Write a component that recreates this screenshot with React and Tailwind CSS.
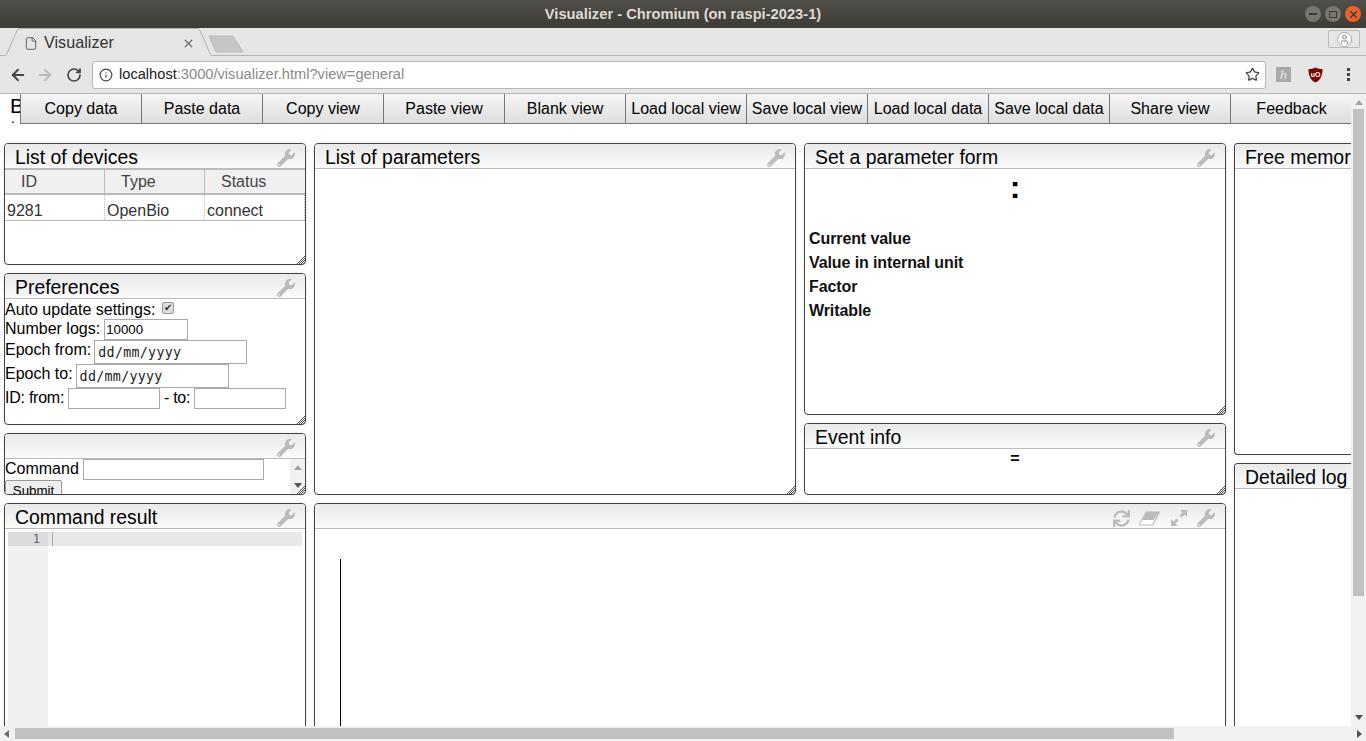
import { ArrowLeft, ArrowRight, RotateCw, Info, Star, File, X, User } from 'lucide-react';
import { FaWrench, FaSync } from 'react-icons/fa';

const toolbarButtons = [
  'Copy data', 'Paste data', 'Copy view', 'Paste view', 'Blank view', 'Load local view',
  'Save local view', 'Load local data', 'Save local data', 'Share view', 'Feedback',
];

const Panel = ({ title, className = '', icons, noResize, clipRight, children }) => (
  <div className={`relative flex flex-col min-w-0 bg-white border border-[#444] rounded-[4px] overflow-hidden shadow-[0_0_3px_rgba(0,0,0,0.12)] ${clipRight ? 'border-r-0 rounded-r-none' : ''} ${className}`}>
    <div className="h-[25px] shrink-0 flex items-start pl-[10px] pr-[10px] bg-gradient-to-b from-[#e9e9e9] to-[#fbfbfb] border-b border-[#bbb]">
      <span className="flex-1 text-[19.4px] leading-[26px] text-black whitespace-nowrap">{title}</span>
      {icons}
      {!clipRight && <FaWrench className="ml-[9px] mt-[5px] w-[18px] h-[18px] text-[#bbb]" />}
    </div>
    <div className="relative flex-1 min-h-0 overflow-hidden">{children}</div>
    {!noResize && !clipRight && (
      <svg className="absolute right-0 bottom-0" width="9" height="9" viewBox="0 0 9 9">
        <path d="M9 1L1 9M9 3L3 9M9 5L5 9M9 7L7 9" stroke="#555" strokeWidth="1" />
      </svg>
    )}
  </div>
);

const Field = ({ className = '', value = '' }) => (
  <input
    readOnly
    value={value}
    className={`h-[21px] px-[1px] bg-white border border-[#aaa] text-[13.3px] text-black outline-none ${className}`}
  />
);

const DateField = ({ className = '' }) => (
  <input
    readOnly
    value="dd/mm/yyyy"
    className={`h-[24px] w-[153px] pl-[3px] bg-white border border-[#aaa] text-[13.3px] tracking-[0.3px] text-[#222] outline-none font-['DejaVu_Sans_Mono',monospace] ${className}`}
  />
);

const TitleBar = () => (
  <div className="relative h-[28px] shrink-0 flex items-center justify-center bg-gradient-to-b from-[#504f49] to-[#3c3b37]">
    <span className="text-[14.7px] font-bold text-[#dfdbd2]">Visualizer - Chromium (on raspi-2023-1)</span>
    <div className="absolute right-[5px] top-[6px] flex gap-[4px]">
      <div className="w-[16px] h-[16px] rounded-full bg-[#77766f] flex items-center justify-center">
        <div className="w-[8px] h-[2px] bg-[#3c3b37]" />
      </div>
      <div className="w-[16px] h-[16px] rounded-full bg-[#77766f] flex items-center justify-center">
        <div className="w-[8px] h-[7px] border border-[#3c3b37]" />
      </div>
      <div className="w-[16px] h-[16px] rounded-full bg-[#e9622c] flex items-center justify-center">
        <X className="w-[11px] h-[11px] text-[#3c3b37]" strokeWidth={3} />
      </div>
    </div>
  </div>
);

const TabStrip = () => (
  <div className="relative h-[28px] shrink-0 bg-[#e6e6e4] border-b border-[#b5b5b3]">
    {/* tab outline and new tab button are drawings */}
    <svg className="absolute left-0 top-0" width="250" height="28" viewBox="0 0 250 28">
      <path d="M0 28H6L17 2.5Q18 0.5 20 0.5H197Q199 0.5 200 2.5L211 28" fill="#e6e6e4" stroke="#b2b2b0" />
      <path d="M6 28H211" stroke="#e6e6e4" strokeWidth="2" />
      <path d="M209 8H233L243 24H216Z" fill="#c6c6c6" stroke="#bbb" strokeLinejoin="round" />
    </svg>
    <File className="absolute left-[24px] top-[8px] w-[14px] h-[15px] text-[#555]" strokeWidth={1.5} />
    <span className="absolute left-[44px] top-[4px] text-[16.2px] leading-[20px] text-[#333]">Visualizer</span>
    <X className="absolute left-[182px] top-[9px] w-[13px] h-[13px] text-[#777]" strokeWidth={2.5} />
    <div className="absolute right-[6px] top-[2px] w-[32px] h-[18px] rounded-[2px] border border-[#bbb] flex items-center justify-center">
      <div className="w-[15px] h-[15px] rounded-full bg-white border border-[#aaa] flex items-center justify-center">
        <User className="w-[11px] h-[11px] text-[#777]" />
      </div>
    </div>
  </div>
);

const AddressBar = () => (
  <div className="h-[38px] shrink-0 flex items-center bg-[#e6e6e4] border-b border-[#b5b5b3]">
    <ArrowLeft className="ml-[9px] w-[18px] h-[18px] text-[#444]" strokeWidth={2.5} />
    <ArrowRight className="ml-[9px] w-[18px] h-[18px] text-[#bbb]" strokeWidth={2.5} />
    <RotateCw className="ml-[12px] w-[16px] h-[16px] text-[#444]" strokeWidth={2.5} />
    <div className="ml-[10px] w-[1174px] h-[28px] flex items-center bg-white border border-[#b5b5b3] rounded-[3px]">
      <Info className="ml-[6px] w-[14px] h-[14px] text-[#444]" />
      <span className="ml-[6px] text-[14.65px] text-[#222]">localhost<span className="text-[#8a8a8a]">:3000/visualizer.html?view=general</span></span>
      <Star className="ml-auto mr-[5px] w-[15px] h-[15px] text-[#444]" strokeWidth={2} />
    </div>
    <div className="ml-[10px] w-[15px] h-[15px] bg-[#a8a8a8] flex items-center justify-center text-[13px] italic font-['Liberation_Serif',serif] font-bold text-[#ddd]">h</div>
    <svg className="ml-[17px]" width="15" height="16" viewBox="0 0 15 16">
      <path d="M7.5 0.5C10 1.5 12 2 14.5 2C14.5 8 13 13 7.5 15.5C2 13 0.5 8 0.5 2C3 2 5 1.5 7.5 0.5Z" fill="#800000" />
      <text x="7.5" y="10" textAnchor="middle" fontSize="7" fontWeight="bold" fill="#fff">uO</text>
    </svg>
    <div className="ml-[24px] flex flex-col gap-[2px]">
      <div className="w-[3px] h-[3px] bg-[#444]" />
      <div className="w-[3px] h-[3px] bg-[#444]" />
      <div className="w-[3px] h-[3px] bg-[#444]" />
    </div>
  </div>
);

const Toolbar = () => (
  <div className="absolute left-[20px] top-0 flex">
    {toolbarButtons.map((label) => (
      <div
        key={label}
        className="w-[121px] h-[30px] flex items-center justify-center bg-gradient-to-b from-[#f6f6f6] to-[#dedede] border-r border-b border-[#777] text-[16px] text-black whitespace-nowrap first:w-[122px] first:border-l last:border-r-0"
      >
        {label}
      </div>
    ))}
  </div>
);

const DevicesTable = () => (
  <div className="text-[16px] text-[#444]">
    <div className="flex h-[26px] bg-[#f0f0f0] border-b-2 border-t border-[#bbb]">
      <div className="w-[100px] pl-[16px] border-r border-[#bbb] leading-[24px]">ID</div>
      <div className="w-[100px] pl-[16px] border-r border-[#bbb] leading-[24px]">Type</div>
      <div className="flex-1 pl-[16px] leading-[24px]">Status</div>
    </div>
    <div className="flex h-[26px] border-b border-[#bbb] text-[#333]">
      <div className="w-[100px] pl-[2px] border-r border-dotted border-[#bbb] leading-[32px]">9281</div>
      <div className="w-[100px] pl-[2px] border-r border-dotted border-[#bbb] leading-[32px]">OpenBio</div>
      <div className="flex-1 pl-[2px] border-r border-dotted border-[#bbb] leading-[32px]">connect</div>
    </div>
  </div>
);

const Preferences = () => (
  <div className="text-[16px] text-black leading-[20px]">
    <div className="flex items-start h-[20px] leading-[22px]">
      Auto update settings:
      <div className="ml-[7px] mt-[3px] w-[12px] h-[12px] rounded-[2px] bg-[#ddd] border border-[#999] flex items-center justify-center text-[10px] leading-none text-[#333]">✔</div>
    </div>
    <div className="flex items-start h-[21px]">
      Number logs:<Field className="ml-[4px] w-[84px]" value="10000" />
    </div>
    <div className="flex items-start h-[24px]">
      Epoch from:<DateField className="ml-[3px]" />
    </div>
    <div className="flex items-start h-[24px]">
      Epoch to:<DateField className="ml-[3px]" />
    </div>
    <div className="flex items-start h-[22px]">
      <span className="w-[63px] tracking-[-0.25px] whitespace-nowrap">ID: from:</span>
      <Field className="w-[92px]" />
      <span className="ml-[4px] w-[26px] tracking-[-0.3px] whitespace-nowrap">- to:</span>
      <Field className="ml-[4px] w-[92px]" />
    </div>
  </div>
);

const CommandForm = () => (
  <div className="relative h-full text-[16px] text-black">
    <div className="flex items-start h-[21px] leading-[20px]">
      Command<Field className="ml-[4px] w-[181px]" />
    </div>
    <div className="w-[57px] h-[20px] rounded-t-[2px] bg-[#efefef] border border-[#999] text-[13.3px] text-center leading-[20px]">Submit</div>
    {/* scrollbar of the inner form */}
    <div className="absolute right-0 top-0 bottom-0 w-[15px] bg-[#f1f1f1] flex flex-col items-center justify-between py-[6px]">
      <div className="w-0 h-0 border-x-[4px] border-x-transparent border-b-[5px] border-b-[#a3a3a3]" />
      <div className="w-0 h-0 border-x-[4px] border-x-transparent border-t-[5px] border-t-[#555]" />
    </div>
  </div>
);

const CommandResult = () => (
  <div className="flex h-full pl-[3px]">
    <div className="w-[40px] h-full mt-[3px] bg-[#f0f0f0]">
      <div className="h-[14px] bg-[#dcdcdc] pr-[8px] text-right text-[12px] leading-[14px] text-[#56657a] font-['DejaVu_Sans_Mono',monospace]">1</div>
    </div>
    <div className="flex-1 mt-[3px] mr-[3px]">
      <div className="h-[14px] bg-[#e8e8e8] pl-[4px]">
        <div className="w-[1px] h-[14px] bg-[#aaa]" />
      </div>
    </div>
  </div>
);

const GraphIcons = () => (
  <div className="flex items-center mt-[5px] h-[18px] text-[#bbb]">
    <FaSync className="w-[17px] h-[17px]" />
    <svg className="ml-[9px]" width="21" height="15" viewBox="0 0 21 15">
      <path d="M7 1H20.5L14.5 12.5Q14 14 12.5 14H2Q0 14 1 12Z" fill="#fff" stroke="#bbb" strokeWidth="1.2" />
      <path d="M7 1H20.5L14.5 9H3.5Z" fill="#bbb" />
    </svg>
    <svg className="ml-[10px]" width="18" height="18" viewBox="0 0 18 18" fill="#bbb">
      <path d="M10 1H17V8L14.5 5.5L11.5 8.5L9.5 6.5L12.5 3.5Z" />
      <path d="M8 17H1V10L3.5 12.5L6.5 9.5L8.5 11.5L5.5 14.5Z" />
    </svg>
  </div>
);

const Dashboard = () => (
  <div className="relative flex-1 min-h-0 overflow-hidden bg-white">
    <span className="absolute left-[10px] top-[4px] text-[21px] leading-[16px] text-black">B</span>
    <span className="absolute left-[11px] top-[20px] text-[14px] leading-[8px] text-black">.</span>
    <Toolbar />
    <div className="flex h-full gap-[8px] pl-[4px] pt-[49px] -mb-[4px]">
      <div className="w-[302px] shrink-0 flex flex-col gap-[8px] h-[calc(100%+4px)]">
        <Panel title="List of devices" className="h-[122px] shrink-0"><DevicesTable /></Panel>
        <Panel title="Preferences" className="h-[152px] shrink-0"><Preferences /></Panel>
        <Panel title="" className="h-[62px] shrink-0"><CommandForm /></Panel>
        <Panel title="Command result" noResize className="flex-1 min-h-[300px]"><CommandResult /></Panel>
      </div>
      <div className="w-[912px] shrink-0 flex flex-col gap-[8px] h-[calc(100%+4px)]">
        <div className="h-[352px] shrink-0 flex gap-[8px]">
          <Panel title="List of parameters" className="w-[482px] shrink-0" />
          <div className="w-[422px] shrink-0 flex flex-col gap-[8px]">
            <Panel title="Set a parameter form" className="h-[272px] shrink-0">
              <div className="text-center text-[32px] leading-[36px] font-bold text-black">:</div>
              <div className="mt-[22px] pl-[4px] text-[16px] leading-[24px] font-bold tracking-[-0.1px] text-[#111]">
                <div>Current value</div>
                <div>Value in internal unit</div>
                <div>Factor</div>
                <div>Writable</div>
              </div>
            </Panel>
            <Panel title="Event info" className="flex-1">
              <div className="text-center text-[16px] leading-[20px] font-bold text-black">=</div>
            </Panel>
          </div>
        </div>
        <Panel title="" noResize icons={<GraphIcons />} className="flex-1">
          {/* axis of the empty chart */}
          <div className="w-[1px] h-full mt-[30px] ml-[25px] bg-black" />
        </Panel>
      </div>
      <div className="w-[200px] shrink-0 flex flex-col gap-[8px] h-[calc(100%+4px)]">
        <Panel title="Free memory" clipRight className="h-[312px] shrink-0" />
        <Panel title="Detailed log" clipRight className="flex-1" />
      </div>
    </div>
  </div>
);

const VerticalScrollbar = () => (
  <div className="relative w-[15px] shrink-0 bg-[#f1f1f1] flex flex-col items-center">
    <div className="mt-[6px] w-0 h-0 border-x-[4px] border-x-transparent border-b-[5px] border-b-[#a3a3a3]" />
    <div className="mt-[4px] w-[11px] h-[487px] bg-[#c1c1c1]" />
    <div className="absolute bottom-[6px] w-0 h-0 border-x-[4px] border-x-transparent border-t-[5px] border-t-[#505050]" />
  </div>
);

const HorizontalScrollbar = () => (
  <div className="h-[15px] shrink-0 flex items-center bg-[#f1f1f1]">
    <div className="ml-[4px] w-0 h-0 border-y-[4px] border-y-transparent border-r-[5px] border-r-[#707070]" />
    <div className="ml-[6px] w-[1159px] h-[11px] bg-[#c1c1c1]" />
    <div className="ml-auto mr-[4px] w-0 h-0 border-y-[4px] border-y-transparent border-l-[5px] border-l-[#505050]" />
  </div>
);

const App = () => (
  <div className="h-[741px] w-[1366px] flex flex-col overflow-hidden bg-white font-['Liberation_Sans',Arial,sans-serif]">
    <TitleBar />
    <TabStrip />
    <AddressBar />
    <div className="flex flex-1 min-h-0">
      <div className="flex flex-1 min-w-0 flex-col">
        <Dashboard />
      </div>
      <VerticalScrollbar />
    </div>
    <HorizontalScrollbar />
  </div>
);

export default App;
